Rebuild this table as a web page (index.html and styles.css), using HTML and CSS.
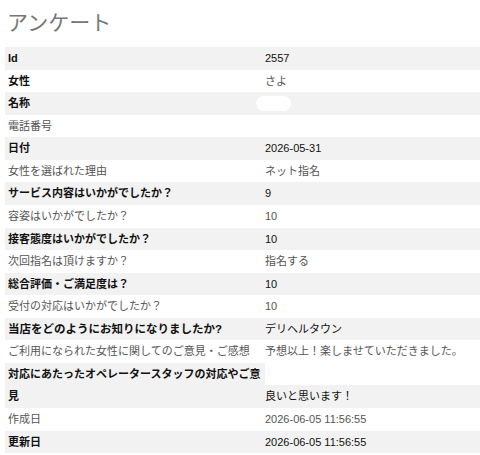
FILE: index.html
```html
<!DOCTYPE html>
<html lang="ja">
<head>
<meta charset="utf-8">
<link rel="stylesheet" href="styles.css">
</head>
<body>
<h1 class="title">アンケート</h1>
<div class="list">
  <div class="row odd"><div class="key">Id</div><div class="val">2557</div></div>
  <div class="row even strong"><div class="key">女性</div><div class="val">さよ</div></div>
  <div class="row odd"><div class="key">名称</div><div class="val"><span class="mask"></span></div></div>
  <div class="row even"><div class="key">電話番号</div><div class="val"></div></div>
  <div class="row odd"><div class="key">日付</div><div class="val">2026-05-31</div></div>
  <div class="row even"><div class="key">女性を選ばれた理由</div><div class="val">ネット指名</div></div>
  <div class="row odd"><div class="key">サービス内容はいかがでしたか？</div><div class="val">9</div></div>
  <div class="row even"><div class="key">容姿はいかがでしたか？</div><div class="val">10</div></div>
  <div class="row odd"><div class="key">接客態度はいかがでしたか？</div><div class="val">10</div></div>
  <div class="row even"><div class="key">次回指名は頂けますか？</div><div class="val">指名する</div></div>
  <div class="row odd"><div class="key">総合評価・ご満足度は？</div><div class="val">10</div></div>
  <div class="row even"><div class="key">受付の対応はいかがでしたか？</div><div class="val">10</div></div>
  <div class="row odd"><div class="key big">当店をどのようにお知りになりましたか?</div><div class="val">デリヘルタウン</div></div>
  <div class="row even"><div class="key">ご利用になられた女性に関してのご意見・ご感想</div><div class="val">予想以上！楽しませていただきました。</div></div>
  <div class="row odd"><div class="key">対応にあたったオペレータースタッフの対応やご意見</div><div class="val">良いと思います！</div></div>
  <div class="row even"><div class="key">作成日</div><div class="val">2026-06-05 11:56:55</div></div>
  <div class="row odd"><div class="key">更新日</div><div class="val">2026-06-05 11:56:55</div></div>
</div>
</body>
</html>
```
FILE: styles.css
```css
html, body {
  margin: 0;
  padding: 0;
  background: #fff;
}
body {
  padding-left: 5px;
  overflow: hidden;
  font-family: "Liberation Sans", "Noto Sans CJK JP", sans-serif;
  font-size: 11px;
}
.title {
  margin: 0;
  padding: 6px 0 0 2px;
  height: 47px;
  box-sizing: border-box;
  font-size: 21px;
  line-height: 30px;
  font-weight: normal;
  color: #777;
  font-family: "Noto Sans CJK JP", sans-serif;
}
.list {
  display: flex;
  flex-direction: column;
}
.row {
  display: flex;
  align-items: flex-end;
  line-height: 22.56px;
}
.key {
  width: 257px;
  flex: none;
  padding-left: 3px;
}
.val {
  flex: 1;
  min-height: 22.56px;
}
.odd .key, .odd .val {
  background: #f2f2f2;
}
.odd {
  color: #111;
}
.odd .key, .strong .key {
  font-weight: bold;
  color: #111;
}
.even {
  color: #555;
}
.big {
  font-size: 11.5px;
}
.mask {
  display: inline-block;
  width: 35px;
  height: 15px;
  border-radius: 8px;
  background: #fff;
  vertical-align: middle;
  margin-left: -9px;
  position: relative;
  top: -1px;
}
```
